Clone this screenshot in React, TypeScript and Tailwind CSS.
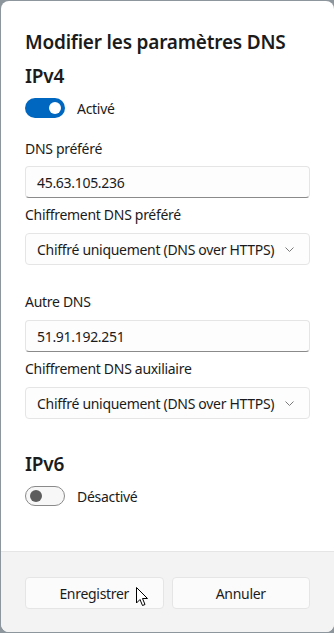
import React from "react";

function Toggle({ on }: { on: boolean }) {
  return on ? (
    <div className="w-[40px] h-[20px] rounded-full bg-[#0067c0] flex items-center justify-end pr-[4px]">
      <div className="w-[12px] h-[12px] rounded-full bg-white" />
    </div>
  ) : (
    <div className="w-[40px] h-[20px] rounded-full border border-[#8a8a8a] bg-[#f7f7f7] flex items-center pl-[4px] box-border">
      <div className="w-[12px] h-[12px] rounded-full bg-[#5d5d5d]" />
    </div>
  );
}

function Input({ value }: { value: string }) {
  return (
    <div className="h-[32px] rounded-[4px] border border-[#e5e5e5] border-b-[#8a8a8a] bg-[#fdfdfd] flex items-center pl-[11px] text-[14px] tracking-[-0.3px] text-[#1b1b1b] box-border">
      {value}
    </div>
  );
}

function Select({ value }: { value: string }) {
  return (
    <div className="h-[32px] rounded-[4px] border border-[#e5e5e5] bg-[#fdfdfd] flex items-center justify-between pl-[11px] pr-[15px] text-[14px] tracking-[-0.3px] text-[#1b1b1b] box-border">
      <span>{value}</span>
      <svg width="9" height="5" viewBox="0 0 9 5" fill="none">
        <path d="M0.5 0.5l4 4 4-4" stroke="#7a7a7a" strokeWidth="1" />
      </svg>
    </div>
  );
}

function Label({ children, className }: { children: React.ReactNode; className: string }) {
  return <div className={"text-[14px] leading-[20px] tracking-[-0.3px] text-[#1b1b1b] " + className}>{children}</div>;
}

export default function App() {
  return (
    <div
      className="w-[334px] h-[633px] bg-[#8e969d] pt-[1px] pl-[1px] pb-[1px] relative overflow-hidden"
      style={{ fontFamily: '"Segoe UI", "Noto Sans", "Open Sans", sans-serif' }}
    >
      <div className="w-[333px] h-[631px] rounded-[8px] bg-white flex flex-col overflow-hidden">
        <div className="flex-1 px-[24px] pt-[27px]">
          <div className="text-[19px] leading-[28px] tracking-[-0.2px] font-semibold text-[#1b1b1b]">Modifier les paramètres DNS</div>
          <div className="mt-[6px] text-[19px] leading-[28px] tracking-[-0.2px] font-semibold text-[#1b1b1b]">IPv4</div>
          <div className="mt-[8px] flex items-center gap-[12px] h-[20px]">
            <Toggle on />
            <span className="text-[14px] tracking-[-0.3px] text-[#1b1b1b]">Activé</span>
          </div>
          <Label className="mt-[21px]">DNS préféré</Label>
          <div className="mt-[7px]">
            <Input value="45.63.105.236" />
          </div>
          <Label className="mt-[7px]">Chiffrement DNS préféré</Label>
          <div className="mt-[8px]">
            <Select value="Chiffré uniquement (DNS over HTTPS)" />
          </div>
          <Label className="mt-[27px]">Autre DNS</Label>
          <div className="mt-[8px]">
            <Input value="51.91.192.251" />
          </div>
          <Label className="mt-[7px]">Chiffrement DNS auxiliaire</Label>
          <div className="mt-[8px]">
            <Select value="Chiffré uniquement (DNS over HTTPS)" />
          </div>
          <div className="mt-[31px] text-[19px] leading-[28px] tracking-[-0.2px] font-semibold text-[#1b1b1b]">IPv6</div>
          <div className="mt-[8px] flex items-center gap-[12px] h-[20px]">
            <Toggle on={false} />
            <span className="text-[14px] tracking-[-0.3px] text-[#1b1b1b]">Désactivé</span>
          </div>
        </div>
        <div className="h-[81px] bg-[#f3f3f3] border-t border-[#e5e5e5] px-[24px] pt-[25px] flex gap-[8px] box-border">
          <div className="flex-1 h-[32px] rounded-[4px] border border-[#e5e5e5] bg-[#fbfbfb] flex items-center justify-center text-[14px] tracking-[-0.3px] text-[#1b1b1b] box-border">
            Enregistrer
          </div>
          <div className="flex-1 h-[32px] rounded-[4px] border border-[#e5e5e5] bg-[#fbfbfb] flex items-center justify-center text-[14px] tracking-[-0.3px] text-[#1b1b1b] box-border">
            Annuler
          </div>
        </div>
      </div>
      <svg className="absolute left-[136px] top-[587px]" width="13" height="20" viewBox="0 0 13 20">
        <path d="M0.5 0.5 L0.5 16 L4 12.5 L6.5 18.5 L9 17.5 L6.5 11.5 L11.5 11.5 Z" fill="#fff" stroke="#000" strokeWidth="1" strokeLinejoin="miter" />
      </svg>
    </div>
  );
}
